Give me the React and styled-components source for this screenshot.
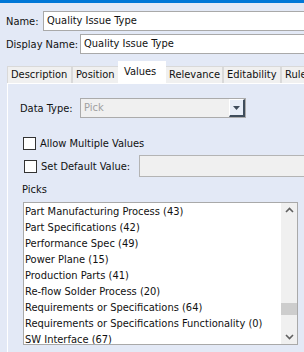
import React from 'react'
import styled, { createGlobalStyle } from 'styled-components'

const GlobalStyle = createGlobalStyle`
  body {
    margin: 0;
    background: #e3e9f6;
    font-family: "DejaVu Sans Condensed", "DejaVu Sans", sans-serif;
    font-size: 11px;
    color: #111;
  }
`

const Page = styled.div`
  width: 304px;
  height: 352px;
  overflow: hidden;
  background: #e3e9f6;
  white-space: nowrap;
`

const TopBar = styled.div`
  height: 3px;
  background: #0078d7;
`

const FieldRow = styled.div`
  display: flex;
  align-items: center;
  margin-top: ${p => p.top}px;
  padding-left: 6px;
`

const Label = styled.span`
  width: ${p => p.w}px;
  flex: none;
  font-size: 11px;
`

const TextInput = styled.div`
  flex: none;
  width: 300px;
  height: 18px;
  line-height: 18px;
  padding-left: 3px;
  background: #fff;
  border: 1px solid #a9a9a9;
  font-size: 11px;
`

const TabStrip = styled.div`
  display: flex;
  align-items: flex-end;
  margin: 7px 0 0 7px;
  height: 22px;
`

const Tab = styled.div`
  flex: none;
  width: ${p => p.w}px;
  height: ${p => (p.active ? 22 : 17)}px;
  line-height: ${p => (p.active ? 20 : 16)}px;
  box-sizing: border-box;
  padding-left: ${p => (p.active ? 5 : 3)}px;
  overflow: hidden;
  font-size: 11px;
  background: ${p => (p.active ? '#fff' : '#f0f0f0')};
  border: 1px solid ${p => (p.active ? '#fff' : '#d9d9d9')};
  border-bottom: none;
  margin-left: ${p => (p.active ? -1 : 0)}px;
  margin-right: ${p => (p.active ? -1 : 0)}px;
  position: relative;
  z-index: ${p => (p.active ? 1 : 0)};
`

const Panel = styled.div`
  margin-left: 7px;
  border-left: 1px solid #fff;
  border-top: 1px solid #fff;
  height: 280px;
  padding-left: 12px;
`

const DataRow = styled.div`
  display: flex;
  align-items: center;
  margin-top: 14px;
`

const Combo = styled.div`
  display: flex;
  width: 166px;
  height: 20px;
  box-sizing: border-box;
  border: 1px solid #ababab;
  background: #f0f0f0;
`

const ComboText = styled.span`
  flex: 1;
  line-height: 18px;
  padding-left: 3px;
  color: #a0a0a0;
  font-size: 11px;
`

const ComboButton = styled.div`
  width: 16px;
  height: 18px;
  box-sizing: border-box;
  border-top: 1px solid #fff;
  border-left: 1px solid #fff;
  border-right: 2px solid #3f4d5c;
  border-bottom: 2px solid #3f4d5c;
  background: #e8eef8;
  display: flex;
  align-items: center;
  justify-content: center;
`

const CheckRow = styled.label`
  display: flex;
  align-items: center;
  margin-top: ${p => p.top}px;
  padding-left: ${p => p.indent}px;
  font-size: 11px;
`

const Box = styled.span`
  flex: none;
  width: 13px;
  height: 13px;
  box-sizing: border-box;
  border: 1px solid #333;
  background: #fff;
  margin-right: 4px;
`

const DefaultInput = styled.div`
  flex: none;
  width: 200px;
  height: 22px;
  box-sizing: border-box;
  border: 1px solid #b4b4b4;
  background: #f0f0f0;
`

const SectionLabel = styled.div`
  margin-top: 6px;
  padding-left: 2px;
  font-size: 11px;
`

const ListBox = styled.div`
  display: flex;
  margin-top: 6px;
  margin-left: 3px;
  width: 275px;
  height: 143px;
  box-sizing: border-box;
  border: 1px solid #a9a9a9;
  background: #fff;
`

const Items = styled.div`
  flex: 1;
  padding: 1px 0 0 1px;
  overflow: hidden;
`

const Item = styled.div`
  height: 16px;
  line-height: 16px;
  font-size: 11px;
`

const ScrollBar = styled.div`
  width: 16px;
  background: #f0f0f0;
  display: flex;
  flex-direction: column;
  align-items: center;
  justify-content: space-between;
  padding: 4px 0;
  box-sizing: border-box;
`

const Track = styled.div`
  flex: 1;
  width: 100%;
  display: flex;
  flex-direction: column;
  justify-content: flex-end;
  padding-bottom: 19px;
`

const Thumb = styled.div`
  height: 12px;
  width: 100%;
  background: #cdcdcd;
`

const Chevron = ({ up }) => (
  <svg width="9" height="6" viewBox="0 0 9 6">
    <path
      d={up ? 'M1 5 L4.5 1.5 L8 5' : 'M1 1 L4.5 4.5 L8 1'}
      fill="none"
      stroke="#606060"
      strokeWidth="1.6"
    />
  </svg>
)

const picks = [
  'Part Manufacturing Process (43)',
  'Part Specifications (42)',
  'Performance Spec (49)',
  'Power Plane (15)',
  'Production Parts (41)',
  'Re-flow Solder Process (20)',
  'Requirements or Specifications (64)',
  'Requirements or Specifications Functionality (0)',
  'SW Interface (67)'
]

const tabs = [
  ['Description', 65],
  ['Position', 47],
  ['Values', 48],
  ['Relevance', 58],
  ['Editability', 58],
  ['Rules', 50]
]

export default function App () {
  return (
    <Page>
      <GlobalStyle />
      <TopBar />
      <FieldRow top={8}>
        <Label w={37}>Name:</Label>
        <TextInput>Quality Issue Type</TextInput>
      </FieldRow>
      <FieldRow top={3}>
        <Label w={74}>Display Name:</Label>
        <TextInput>Quality Issue Type</TextInput>
      </FieldRow>
      <TabStrip>
        {tabs.map(([t, w]) => (
          <Tab key={t} w={w} active={t === 'Values'}>{t}</Tab>
        ))}
      </TabStrip>
      <Panel>
        <DataRow>
          <Label w={60}>Data Type:</Label>
          <Combo>
            <ComboText>Pick</ComboText>
            <ComboButton>
              <svg width="7" height="4" viewBox="0 0 7 4">
                <path d="M0 0 H7 L3.5 4 Z" fill="#3f4d5c" />
              </svg>
            </ComboButton>
          </Combo>
        </DataRow>
        <CheckRow top={19} indent={3}>
          <Box />
          Allow Multiple Values
        </CheckRow>
        <CheckRow top={5} indent={4}>
          <Box />
          <Label w={98}>Set Default Value:</Label>
          <DefaultInput />
        </CheckRow>
        <SectionLabel>Picks</SectionLabel>
        <ListBox>
          <Items>
            {picks.map(p => <Item key={p}>{p}</Item>)}
          </Items>
          <ScrollBar>
            <Chevron up />
            <Track><Thumb /></Track>
            <Chevron />
          </ScrollBar>
        </ListBox>
      </Panel>
    </Page>
  )
}
